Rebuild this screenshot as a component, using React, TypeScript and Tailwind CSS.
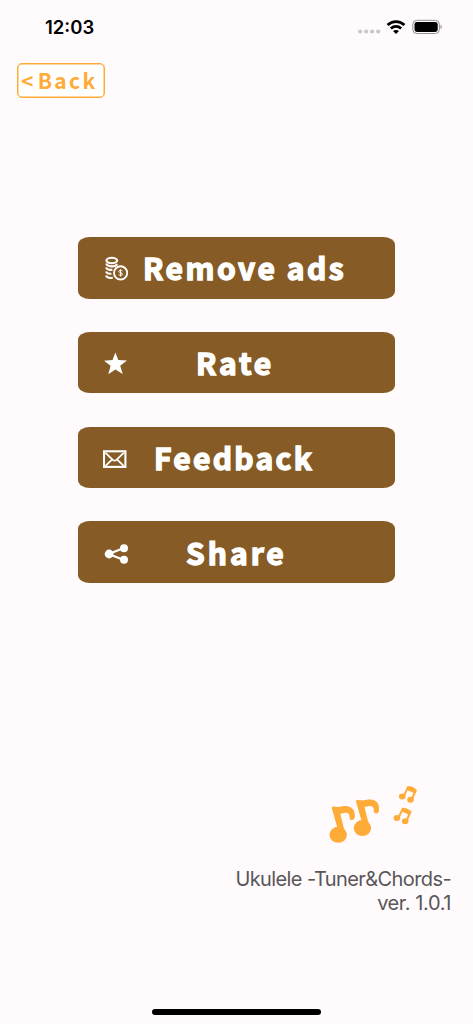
import React from "react";

const menuItems = [
  { label: "Remove ads", icon: <CoinsIcon />, className: "pl-[65px] tracking-[2.5px]" },
  { label: "Rate", icon: <StarIcon />, className: "pl-[118px] tracking-[2.8px]" },
  { label: "Feedback", icon: <MailIcon />, className: "pl-[76px] tracking-[2.3px]" },
  { label: "Share", icon: <ShareIcon />, className: "pl-[108px] tracking-[3px]" },
];

function CoinsIcon() {
  return (
    <svg width="26" height="26" viewBox="0 0 26 26" fill="none" stroke="#fff">
      <ellipse cx="8.8" cy="4.5" rx="5.4" ry="2.7" strokeWidth="2.1" />
      <path
        d="M3.2 7.5c1 3.2 8.5 4.2 11 .6M3 11.5c.6 1.8 3.4 2.6 6.4 2.3M3 15.5c.6 1.6 2.8 2.4 5.4 2.2M3 19.5c.6 1.8 3.4 2.7 6.8 2.3"
        strokeWidth="2.1"
      />
      <circle cx="17.6" cy="16.9" r="6.6" strokeWidth="1.9" />
      <path
        d="M19.4 15c-.5-1-3.6-1.2-3.6.3 0 1.8 3.7 1 3.7 2.9 0 1.5-3.2 1.6-3.9.3M17.6 13.3v7.2"
        strokeWidth="1"
      />
    </svg>
  );
}

function StarIcon() {
  return (
    <svg width="26" height="26" viewBox="0 0 26 26" fill="#fff">
      <path d="M12.4 1.4l2.9 7.7 8.7.4-6.8 5.2 2.5 8.4-7.3-4.6-7.1 4.8 2.3-8.6L1 9.7l8.5-.6z" />
    </svg>
  );
}

function MailIcon() {
  return (
    <svg
      width="26"
      height="26"
      viewBox="0 0 26 26"
      fill="none"
      stroke="#fff"
      strokeWidth="1.8"
    >
      <rect x="1" y="5.3" width="21.4" height="15.6" strokeWidth="2.1" />
      <path d="M2.5 6.8l7.3 7c1.2 1.1 2.4 1.1 3.6 0l7.3-7M2.5 19.8l6.2-6M20.7 19.8l-6.2-6" />
    </svg>
  );
}

function ShareIcon() {
  return (
    <svg width="26" height="26" viewBox="0 0 26 26" fill="#fff">
      <path d="M20.9 8L5.7 14l15.2 6" fill="none" stroke="#fff" strokeWidth="2.3" />
      <circle cx="6.1" cy="14" r="4.4" />
      <circle cx="21" cy="8.3" r="4" />
      <circle cx="21" cy="19.8" r="4" />
    </svg>
  );
}

function StatusBar() {
  return (
    <div className="flex h-[54px] items-center justify-between pr-[31px] pl-[45px]">
      <span className="pt-[2px] font-['Inter','Liberation_Sans',sans-serif] text-[18.5px] font-semibold text-black">
        12:03
      </span>
      <svg width="84" height="18" viewBox="0 0 84 18">
        <g fill="#c9c7c9">
          <circle cx="2.2" cy="13.5" r="2.1" />
          <circle cx="8.2" cy="13.5" r="2.1" />
          <circle cx="14.2" cy="13.5" r="2.1" />
          <circle cx="20.2" cy="13.5" r="2.1" />
        </g>
        <g fill="none" stroke="#000" strokeWidth="2.8">
          <path d="M29.6 7c4.7-4.6 12.1-4.6 16.8 0" />
          <path d="M32.9 10.5c2.9-2.8 7.3-2.8 10.2 0" />
        </g>
        <path d="M38 16l-3-2.9c1.6-1.6 4.4-1.6 6 0z" />
        <rect x="54.8" y="2.3" width="26.6" height="13.2" rx="4" fill="none" stroke="#939193" />
        <rect x="56.5" y="3.9" width="23.2" height="10" rx="2.4" />
        <path d="M82.5 6.8c1.7.7 1.7 3.6 0 4.3z" fill="#939193" />
      </svg>
    </div>
  );
}

function MusicNotes() {
  return (
    <svg width="92" height="62" viewBox="328 784 92 62" fill="#ffab38">
      <g id="big-note">
        <path d="M331.8 808.3c0-1.2.8-1.9 2-1.7 6.5 1.1 9.5-1.3 14.4-.2 4.8 1 7 4.3 6.6 10.7-.3 4.2-5.5 3.9-5.3-.2.2-3-1.2-4.3-4-4.1-2.3.2-3.7 1-5.2 1l4.5 18.2-5.8 1.4z" />
        <ellipse cx="338.2" cy="834.8" rx="8.7" ry="8" />
      </g>
      <use href="#big-note" x="24.2" y="-6.7" />
      <g id="small-note">
        <path d="M402.6 796.5l4.8-10.4c4.2.1 6.6 1.3 9.6 4.1l-4.5 10-2.1-.8 3-6.3c-2-1.5-3.7-2.2-6-2.6l-2.8 6.9z" />
        <ellipse cx="402.2" cy="796.4" rx="3.3" ry="3" />
        <ellipse cx="410.5" cy="799.7" rx="3.3" ry="3" />
      </g>
      <use href="#small-note" x="-5.3" y="21.6" />
    </svg>
  );
}

export default function App() {
  return (
    <div className="flex h-[1024px] w-[473px] flex-col bg-[#fffbfd]">
      <StatusBar />

      <button className="mt-[9px] ml-[17px] flex h-[35px] w-[88px] items-center gap-[2px] rounded-[5px] border border-[#ffab38] bg-white pl-[3px] font-['Noto_Sans_CJK_JP',sans-serif] text-[21px] leading-none font-bold tracking-[2.3px] whitespace-nowrap text-[#ffab38] shadow-[inset_0_0_0_0.5px_#ffab38]">
        <span>&lt;</span>
        <span>Back</span>
      </button>

      <div className="mt-[139px] flex flex-col gap-[33.3px] px-[78px]">
        {menuItems.map((item) => (
          <button
            key={item.label}
            className="relative flex h-[61.5px] items-center rounded-[12px/8px] bg-[#865b25]"
          >
            <span className="absolute top-[19px] left-[25px]">{item.icon}</span>
            <span
              className={`${item.className} pb-[1px] font-['Noto_Sans_CJK_JP',sans-serif] text-[30px] leading-none font-bold whitespace-nowrap text-white [stroke-linejoin:round] [-webkit-text-stroke:1.4px_white]`}
            >
              {item.label}
            </span>
          </button>
        ))}
      </div>

      <div className="mt-auto flex flex-col items-end pr-[22px]">
        <div className="mr-[31px]">
          <MusicNotes />
        </div>
        <div className="mt-[22px] text-right font-['Inter','Liberation_Sans',sans-serif] text-[20px] leading-[23.5px] whitespace-nowrap text-[#585658]">
          <p className="tracking-[-0.6px]">Ukulele -Tuner&amp;Chords-</p>
          <p className="tracking-[-0.4px]">ver. 1.0.1</p>
        </div>
      </div>

      <div className="mt-[94px] mb-[9px] ml-[152px] h-[6px] w-[169px] shrink-0 rounded-full bg-black" />
    </div>
  );
}
